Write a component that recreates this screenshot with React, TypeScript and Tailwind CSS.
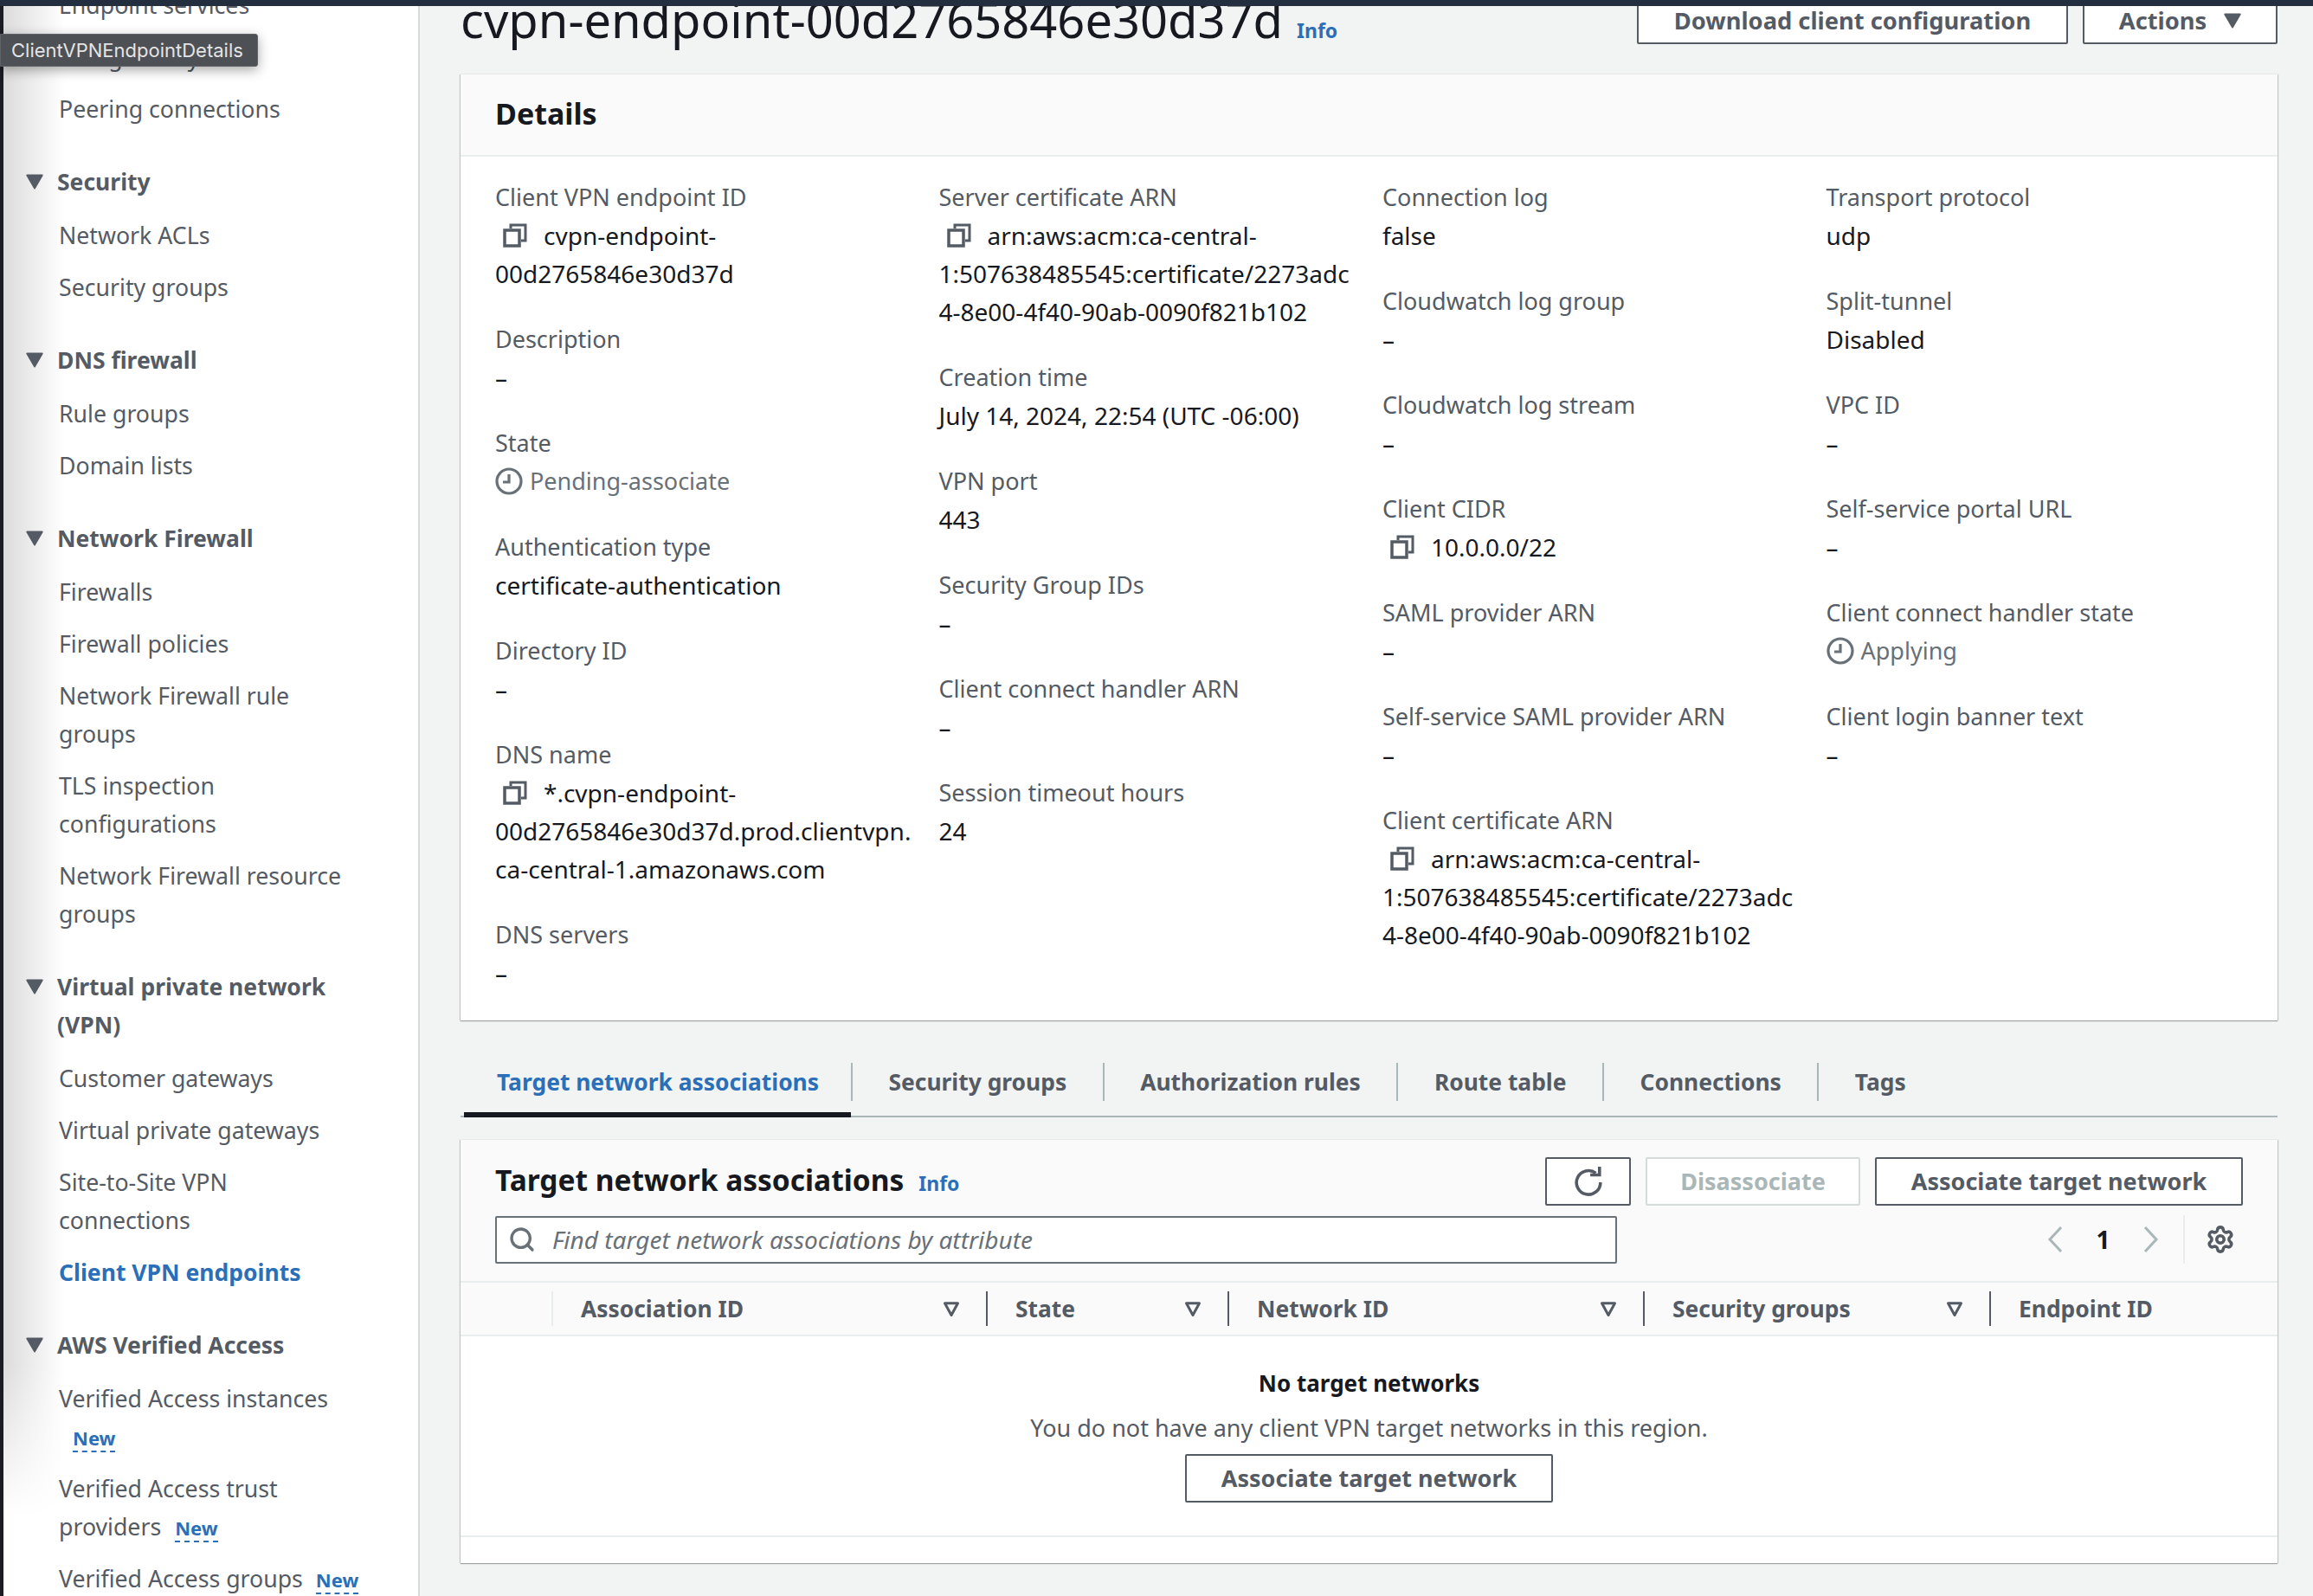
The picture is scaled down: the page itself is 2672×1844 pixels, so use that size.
import { Search, Settings } from 'lucide-react'

type Field = { label: string; value?: string[]; copy?: boolean; status?: boolean }

const columns: Field[][] = [
  [
    { label: 'Client VPN endpoint ID', value: ['cvpn-endpoint-', '00d2765846e30d37d'], copy: true },
    { label: 'Description', value: ['–'] },
    { label: 'State', value: ['Pending-associate'], status: true },
    { label: 'Authentication type', value: ['certificate-authentication'] },
    { label: 'Directory ID', value: ['–'] },
    { label: 'DNS name', value: ['*.cvpn-endpoint-', '00d2765846e30d37d.prod.clientvpn.', 'ca-central-1.amazonaws.com'], copy: true },
    { label: 'DNS servers', value: ['–'] },
  ],
  [
    { label: 'Server certificate ARN', value: ['arn:aws:acm:ca-central-', '1:507638485545:certificate/2273adc', '4-8e00-4f40-90ab-0090f821b102'], copy: true },
    { label: 'Creation time', value: ['July 14, 2024, 22:54 (UTC -06:00)'] },
    { label: 'VPN port', value: ['443'] },
    { label: 'Security Group IDs', value: ['–'] },
    { label: 'Client connect handler ARN', value: ['–'] },
    { label: 'Session timeout hours', value: ['24'] },
  ],
  [
    { label: 'Connection log', value: ['false'] },
    { label: 'Cloudwatch log group', value: ['–'] },
    { label: 'Cloudwatch log stream', value: ['–'] },
    { label: 'Client CIDR', value: ['10.0.0.0/22'], copy: true },
    { label: 'SAML provider ARN', value: ['–'] },
    { label: 'Self-service SAML provider ARN', value: ['–'] },
    { label: 'Client certificate ARN', value: ['arn:aws:acm:ca-central-', '1:507638485545:certificate/2273adc', '4-8e00-4f40-90ab-0090f821b102'], copy: true },
  ],
  [
    { label: 'Transport protocol', value: ['udp'] },
    { label: 'Split-tunnel', value: ['Disabled'] },
    { label: 'VPC ID', value: ['–'] },
    { label: 'Self-service portal URL', value: ['–'] },
    { label: 'Client connect handler state', value: ['Applying'], status: true },
    { label: 'Client login banner text', value: ['–'] },
  ],
]

const navGroups = [
  { title: 'Security', items: ['Network ACLs', 'Security groups'] },
  { title: 'DNS firewall', items: ['Rule groups', 'Domain lists'] },
  {
    title: 'Network Firewall',
    items: ['Firewalls', 'Firewall policies', 'Network Firewall rule\ngroups', 'TLS inspection\nconfigurations', 'Network Firewall resource\ngroups'],
  },
]

function Caret({ className }: { className: string }) {
  return (
    <svg viewBox="0 0 16 14" className={className}>
      <path d="M1 1h14L8 13z" fill="#545b64" stroke="#545b64" strokeWidth="1.5" strokeLinejoin="round" />
    </svg>
  )
}

function SortIcon() {
  return (
    <svg viewBox="0 0 16 16" className="w-[20px] h-[20px] shrink-0">
      <path d="M2 3h12L8 14z" fill="none" stroke="#545b64" strokeWidth="2.4" strokeLinejoin="round" />
    </svg>
  )
}

function CopyIcon() {
  return (
    <svg viewBox="0 0 28 28" className="w-[28px] h-[28px] shrink-0">
      <path d="M9 6V2h17v18h-5" fill="none" stroke="#545b64" strokeWidth="3" />
      <rect x="2" y="8" width="17" height="18" fill="none" stroke="#545b64" strokeWidth="3.5" />
    </svg>
  )
}

function ClockIcon() {
  return (
    <svg viewBox="0 0 32 32" className="w-[32px] h-[32px] shrink-0">
      <circle cx="16" cy="16" r="14" fill="none" stroke="#687078" strokeWidth="3.2" />
      <path d="M16 8v9h-7" fill="none" stroke="#687078" strokeWidth="3.2" />
    </svg>
  )
}

function RefreshIcon() {
  return (
    <svg viewBox="0 0 32 32" className="w-[34px] h-[34px]">
      <path d="M24 7A13 13 0 1 0 29 17" fill="none" stroke="#545b64" strokeWidth="3.4" />
      <path d="M18 9h10V0" fill="none" stroke="#545b64" strokeWidth="3.4" />
    </svg>
  )
}

function Chevron({ flip }: { flip?: boolean }) {
  return (
    <svg viewBox="0 0 20 30" className="w-[20px] h-[30px] shrink-0">
      <path d={flip ? 'M3 1l13 14L3 29' : 'M17 1L4 15l13 14'} fill="none" stroke="#aab7b8" strokeWidth="3" />
    </svg>
  )
}

function NewBadge({ className }: { className: string }) {
  return (
    <span className={`inline-block text-[22px] leading-[30px] font-bold text-[#2a6fb8] border-b-2 border-dashed border-[#2a6fb8] ${className}`}>
      New
    </span>
  )
}

function NavItem({ children }: { children: React.ReactNode }) {
  return <div className="text-[26.7px] text-[#545b64] whitespace-pre-line">{children}</div>
}

function NavTitle({ children }: { children: React.ReactNode }) {
  return (
    <div className="flex items-start gap-[16px] text-[26.5px] font-bold text-[#545b64]">
      <Caret className="w-[20px] h-[18px] shrink-0 mt-[13px]" />
      <span className="whitespace-pre-line">{children}</span>
    </div>
  )
}

function DetailField({ field }: { field: Field }) {
  return (
    <div>
      <div className="text-[27px] text-[#545b64]">{field.label}</div>
      {field.value?.map((line, i) => (
        <div key={i} className={`flex items-center whitespace-nowrap ${field.status ? 'text-[27px] text-[#687078] gap-[8px]' : 'text-[#16191f]'}`}>
          {field.copy && i === 0 && (
            <span className="ml-[9px] mr-[19px]">
              <CopyIcon />
            </span>
          )}
          {field.status && <ClockIcon />}
          {line}
        </div>
      ))}
    </div>
  )
}

const tabs = ['Security groups', 'Authorization rules', 'Route table', 'Connections', 'Tags']

const tableColumns = [
  { name: 'Association ID', width: 'w-[500px]' },
  { name: 'State', width: 'w-[279px]' },
  { name: 'Network ID', width: 'w-[480px]' },
  { name: 'Security groups', width: 'w-[400px]' },
]

export default function App() {
  return (
    <div className="relative w-[2672px] h-[1844px] overflow-hidden flex flex-col bg-[#f2f3f3] font-['Noto_Sans',sans-serif] text-[28px] leading-[44px]">
      <div className="h-[7px] shrink-0 bg-[#232f3e] z-10" />

      <div className="flex flex-1 min-h-0">
        <div className="w-[4px] shrink-0 bg-[#1b1d23]" />

        {/* Sidebar */}
        <aside className="relative w-[481px] shrink-0 overflow-hidden border-r-2 border-[#d5dbdb] bg-white">
          {/* window shadow on the left edge, gone near the bottom */}
          <div className="absolute left-0 top-0 w-[70px] h-[1745px] bg-gradient-to-r from-[#dcdcdc] to-white [mask-image:linear-gradient(to_bottom,black_90%,transparent)]" />
          <div className="relative -mt-[23px] pl-[26px] pr-[20px]">
            <div className="pl-[38px] flex flex-col gap-[16px]">
              <NavItem>Endpoint services</NavItem>
              <NavItem>NAT gateways</NavItem>
              <NavItem>Peering connections</NavItem>
            </div>

            {navGroups.map((group) => (
              <div key={group.title} className="mt-[40px]">
                <NavTitle>{group.title}</NavTitle>
                <div className="mt-[18px] pl-[38px] flex flex-col gap-[16px]">
                  {group.items.map((item) => (
                    <NavItem key={item}>{item}</NavItem>
                  ))}
                </div>
              </div>
            ))}

            <div className="mt-[40px]">
              <NavTitle>{'Virtual private network\n(VPN)'}</NavTitle>
              <div className="mt-[18px] pl-[38px] flex flex-col gap-[16px]">
                <NavItem>Customer gateways</NavItem>
                <NavItem>Virtual private gateways</NavItem>
                <NavItem>{'Site-to-Site VPN\nconnections'}</NavItem>
                <div className="text-[26.5px] font-bold text-[#2a6fb8]">Client VPN endpoints</div>
              </div>
            </div>

            <div className="mt-[40px]">
              <NavTitle>AWS Verified Access</NavTitle>
              <div className="mt-[18px] pl-[38px] flex flex-col gap-[16px]">
                <NavItem>
                  {'Verified Access instances\n'}
                  <NewBadge className="ml-[16px]" />
                </NavItem>
                <NavItem>
                  {'Verified Access trust\nproviders '}
                  <NewBadge className="ml-[9px]" />
                </NavItem>
                <NavItem>
                  {'Verified Access groups '}
                  <NewBadge className="ml-[8px]" />
                </NavItem>
              </div>
            </div>
          </div>
        </aside>

        {/* Main */}
        <main className="flex-1 min-w-0 overflow-hidden pl-[47px] pr-[41px]">
          <div className="flex justify-between items-start -mt-[11px] h-[90px]">
            <div className="flex items-baseline gap-[16px] -mt-[12px]">
              <h1 className="text-[56px] leading-[76px] text-[#16191f] whitespace-nowrap">cvpn-endpoint-00d2765846e30d37d</h1>
              <span className="text-[23px] font-bold text-[#2a6fb8]">Info</span>
            </div>
            <div className="flex gap-[17px]">
              <button className="w-[498px] h-[55px] border-2 border-[#545b64] rounded-[2px] bg-white text-[27.3px] font-bold text-[#545b64] leading-none">
                Download client configuration
              </button>
              <button className="w-[225px] h-[55px] border-2 border-[#545b64] rounded-[2px] bg-white text-[27.3px] font-bold text-[#545b64] leading-none flex items-center justify-center gap-[20px]">
                Actions
                <Caret className="w-[20px] h-[18px]" />
              </button>
            </div>
          </div>

          {/* Details card */}
          <section className="bg-white shadow-[0_1px_1px_#0000004d,1px_0_1px_#00000026,-1px_0_1px_#00000026]">
            <div className="h-[95px] px-[40px] flex items-center bg-[#fafafa] border-b-2 border-[#eaeded]">
              <h2 className="text-[34px] font-bold text-[#16191f] -mt-[4px]">Details</h2>
            </div>
            <div className="grid grid-cols-4 pl-[40px] pr-[9px] pt-[25px] pb-[33px]">
              {columns.map((column, i) => (
                <div key={i} className="flex flex-col gap-[32px]">
                  {column.map((field) => (
                    <DetailField key={field.label} field={field} />
                  ))}
                </div>
              ))}
            </div>
          </section>

          {/* Tabs */}
          <div className="mt-[44px] h-[68px] flex border-b-2 border-[#aab7b8] text-[26.4px] font-bold">
            <div className="ml-[4px] w-[447px] h-[68px] pl-[38px] pt-[5px] border-b-[6px] border-[#16191f] text-[#2a6fb8] whitespace-nowrap">Target network associations</div>
            {tabs.map((tab) => (
              <div key={tab} className="h-[44px] mt-[5px] px-[41.5px] border-l-2 border-[#aab7b8] text-[#545b64] whitespace-nowrap">
                {tab}
              </div>
            ))}
          </div>

          {/* Target networks card */}
          <section className="mt-[26px] bg-white shadow-[0_1px_1px_#0000004d,1px_0_1px_#00000026,-1px_0_1px_#00000026]">
            <div className="bg-[#fafafa] border-b-2 border-[#eaeded]">
              <div className="h-[165px] pl-[40px] pr-[40px] border-b-2 border-[#eaeded]">
                <div className="flex items-center justify-between pt-[20px]">
                  <div className="flex items-baseline gap-[17px]">
                    <h2 className="text-[33.5px] font-bold text-[#16191f] whitespace-nowrap">Target network associations</h2>
                    <span className="text-[23px] font-bold text-[#2a6fb8]">Info</span>
                  </div>
                  <div className="flex gap-[17px]">
                    <button className="w-[99px] h-[56px] flex items-center justify-center border-2 border-[#545b64] rounded-[2px] bg-white">
                      <RefreshIcon />
                    </button>
                    <button className="w-[248px] h-[56px] pb-[2px] border-2 border-[#d5dbdb] rounded-[2px] bg-white text-[27px] font-bold text-[#aab7b8] leading-none">Disassociate</button>
                    <button className="w-[425px] h-[56px] pb-[2px] border-2 border-[#545b64] rounded-[2px] bg-white text-[27px] font-bold text-[#545b64] leading-none">Associate target network</button>
                  </div>
                </div>
                <div className="flex items-center mt-[11px]">
                  <div className="w-[1296px] h-[55px] flex items-center gap-[19px] px-[13px] border-2 border-[#687078] rounded-[2px] bg-white">
                    <Search className="w-[32px] h-[32px] text-[#687078]" strokeWidth={2.5} />
                    <span className="italic text-[#687078]">Find target network associations by attribute</span>
                  </div>
                  <div className="ml-auto flex items-center h-[56px]">
                    <Chevron />
                    <span className="mx-[37px] font-bold text-[#16191f] w-[17px] text-center">1</span>
                    <Chevron flip />
                    <div className="ml-[27px] mr-[9px] h-[56px] border-l-2 border-[#eaeded] pl-[24px] flex items-center">
                      <Settings className="w-[34px] h-[34px] text-[#545b64]" strokeWidth={2.5} />
                    </div>
                  </div>
                </div>
              </div>
              <div className="h-[60px] flex items-center text-[26.4px] font-bold text-[#545b64]">
                <div className="w-[107px] h-[40px] border-r-2 border-[#eaeded]" />
                {tableColumns.map((col, i) => (
                  <div key={col.name} className={`${col.width} h-[40px] flex items-center justify-between pl-[32px] pr-[30px] whitespace-nowrap ${i > 0 ? 'border-l-2 border-[#545b64]' : ''}`}>
                    {col.name}
                    <SortIcon />
                  </div>
                ))}
                <div className="h-[40px] flex items-center pl-[32px] border-l-2 border-[#545b64] whitespace-nowrap">Endpoint ID</div>
              </div>
            </div>
            <div className="h-[232px] flex flex-col items-center pt-[32px] border-b-2 border-[#eaeded]">
              <div className="text-[26px] font-bold text-[#16191f] leading-[44px]">No target networks</div>
              <div className="mt-[8px] text-[27px] text-[#545b64]">You do not have any client VPN target networks in this region.</div>
              <button className="mt-[8px] w-[425px] h-[56px] pb-[2px] border-2 border-[#545b64] rounded-[2px] bg-white text-[27px] font-bold text-[#545b64] leading-none">Associate target network</button>
            </div>
            <div className="h-[30px]" />
          </section>
        </main>
      </div>

      {/* Tooltip */}
      <div className="absolute left-0 top-[39px] w-[298px] h-[38px] flex items-center pl-[12px] bg-[#4d5054] border border-[#5f6368] rounded-r-[3px] shadow-[0_4px_14px_#00000059] font-['Inter',sans-serif] text-[22px] leading-none text-[#e4e4e4] whitespace-nowrap">
        ClientVPNEndpointDetails
      </div>
    </div>
  )
}
